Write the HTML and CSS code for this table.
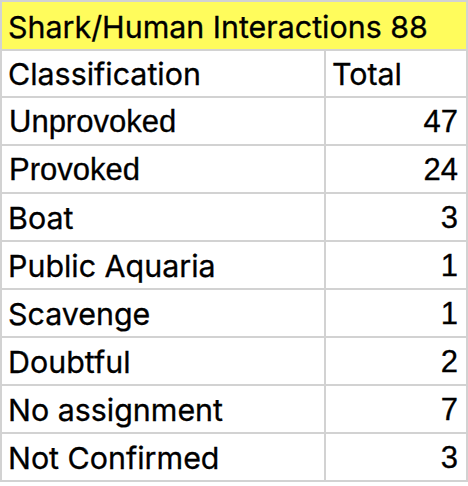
FILE: index.html
```html
<!DOCTYPE html>
<html lang="en">
<head>
<meta charset="utf-8">
<title>Shark/Human Interactions</title>
<link rel="stylesheet" href="styles.css">
</head>
<body>
<div class="sheet">
  <div class="cell title">Shark/Human Interactions 88</div>
  <div class="cell apt first">Classification</div>
  <div class="cell apt first">Total</div>
  <div class="cell ari">Unprovoked</div>
  <div class="cell ari num">47</div>
  <div class="cell ari">Provoked</div>
  <div class="cell ari num">24</div>
  <div class="cell apt">Boat</div>
  <div class="cell ari num">3</div>
  <div class="cell apt">Public Aquaria</div>
  <div class="cell ari num">1</div>
  <div class="cell apt">Scavenge</div>
  <div class="cell ari num">1</div>
  <div class="cell apt">Doubtful</div>
  <div class="cell ari num">2</div>
  <div class="cell apt">No assignment</div>
  <div class="cell ari num">7</div>
  <div class="cell apt">Not Confirmed</div>
  <div class="cell ari num">3</div>
</div>
</body>
</html>
```
FILE: styles.css
```css
html, body {
  margin: 0;
  padding: 0;
  background: #ffffff;
}

.sheet {
  display: grid;
  grid-template-columns: 322px 140px;
  grid-template-rows: 47px 45px repeat(8, 46px);
  gap: 2px;
  padding: 2px;
  width: 468px;
  box-sizing: border-box;
  background: #d2d2d2;
  color: #000000;
}

.cell {
  background: #ffffff;
  display: flex;
  align-items: flex-end;
  padding: 0 8px 7px 6px;
  white-space: nowrap;
  overflow: hidden;
  -webkit-text-stroke: 0.3px #000000;
}

.title {
  grid-column: 1 / 3;
  background: #fffc5c;
  font-family: Inter, "Liberation Sans", sans-serif;
  font-size: 30.4px;
  line-height: 30px;
}

.apt {
  font-family: Inter, "Liberation Sans", sans-serif;
  font-size: 30.4px;
  line-height: 30px;
}

.ari {
  font-family: "Liberation Sans", Arial, sans-serif;
  font-size: 31px;
  line-height: 31px;
  padding-left: 7px;
}

.num {
  justify-content: flex-end;
}
```
